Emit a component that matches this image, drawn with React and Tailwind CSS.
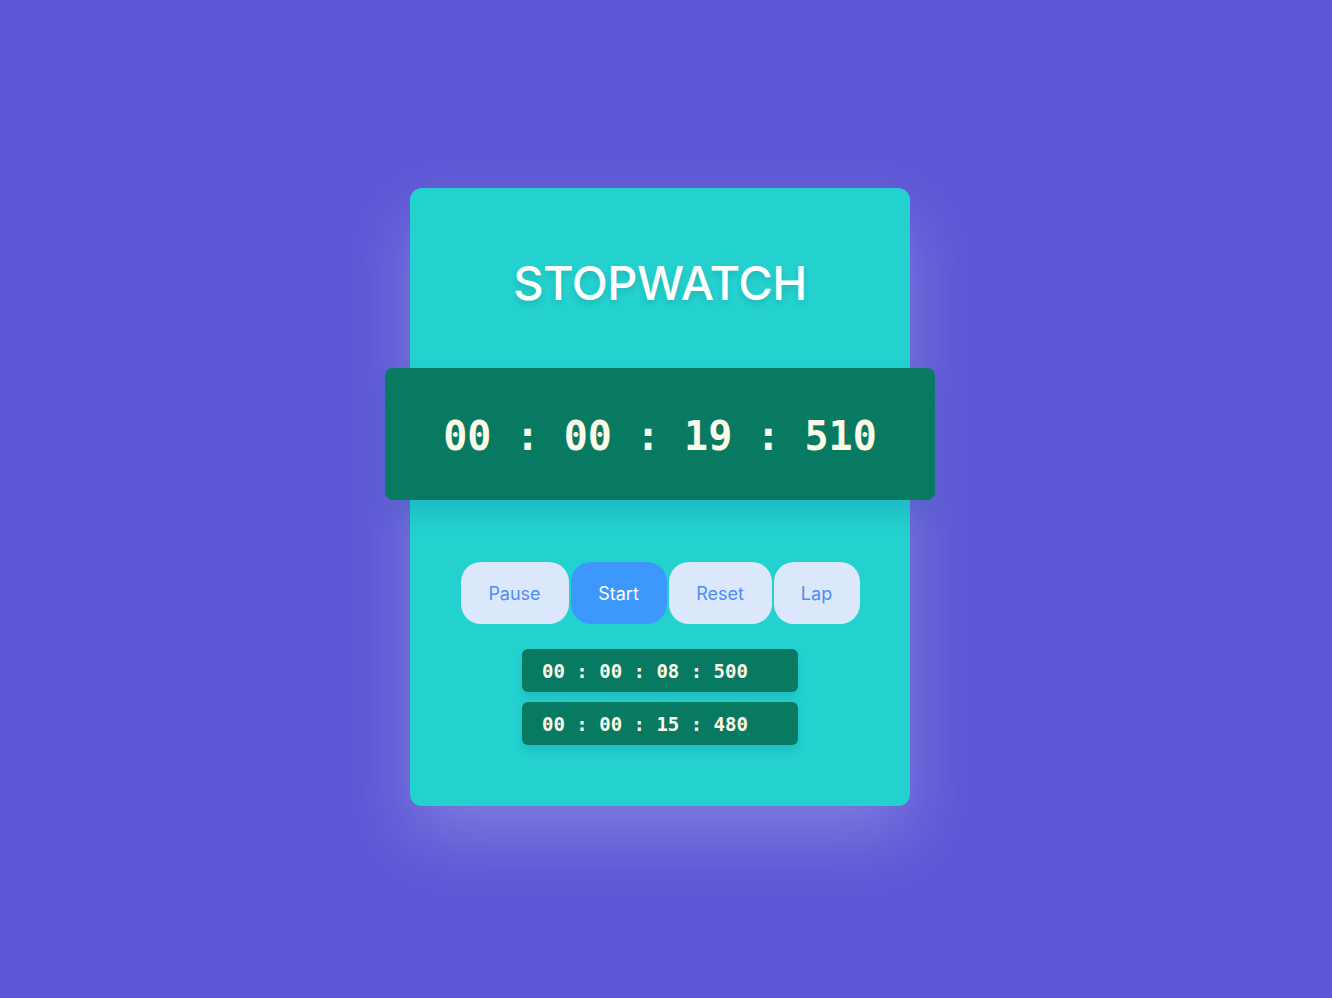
const LAPS = ['00 : 00 : 08 : 500', '00 : 00 : 15 : 480'];

const BUTTONS = [
  { label: 'Pause', w: 'w-[108px]', active: false },
  { label: 'Start', w: 'w-[96px]', active: true },
  { label: 'Reset', w: 'w-[103px]', active: false },
  { label: 'Lap', w: 'w-[86px]', active: false },
];

const mono = { fontFamily: '"DejaVu Sans Mono", "Liberation Mono", monospace' };

export default function App() {
  return (
    <div className="min-h-[998px] w-full bg-[#5d57d6] flex justify-center pt-[188px] pr-[12px]" style={{ fontFamily: 'Inter, "Noto Sans", sans-serif' }}>
      <div className="w-[500px] h-[618px] rounded-[12px] bg-[#23d1cf] flex flex-col items-center shadow-[0_30px_70px_rgba(255,255,255,0.22)]">
        <h1 className="mt-[65px] h-[60px] text-[47px] leading-[60px] font-medium tracking-[-0.5px] text-white [text-shadow:0_4px_6px_rgba(0,0,0,0.12)]">
          STOPWATCH
        </h1>

        <div className="mt-[55px] w-[550px] h-[132px] rounded-[8px] bg-[#087a62] flex items-center justify-center pt-[4px] shadow-[0_14px_24px_rgba(10,90,140,0.18)]">
          <span className="text-[40px] font-bold text-[#fdfbe8]" style={mono}>
            00 : 00 : 19 : 510
          </span>
        </div>

        <div className="mt-[62px] flex gap-[2px]">
          {BUTTONS.map(b => (
            <button
              key={b.label}
              className={`${b.w} h-[62px] rounded-[20px] text-[18px] font-normal ${b.active ? 'bg-[#3d98fe] text-white' : 'bg-[#dbe8fc] text-[#4d8df7]'}`}
            >
              {b.label}
            </button>
          ))}
        </div>

        <div className="mt-[25px] flex flex-col gap-[10px]">
          {LAPS.map(l => (
            <div key={l} className="w-[276px] h-[43px] rounded-[6px] bg-[#087a62] flex items-center pl-[20px] pt-[1px] shadow-[0_6px_10px_rgba(10,90,120,0.15)]">
              <span className="text-[19px] font-bold text-[#fdfbe8]" style={mono}>{l}</span>
            </div>
          ))}
        </div>
      </div>
    </div>
  );
}
